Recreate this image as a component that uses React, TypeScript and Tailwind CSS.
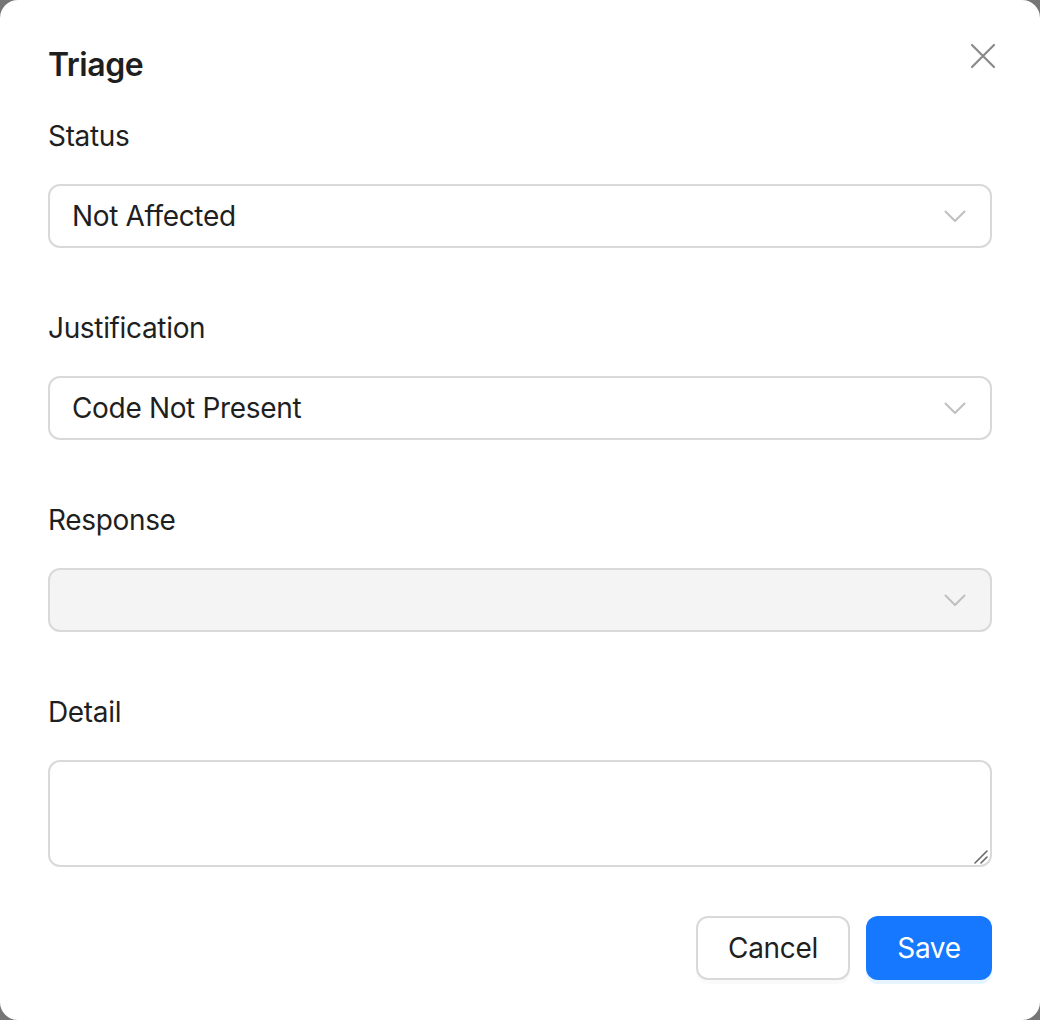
import React from "react";

const Chevron = () => (
  <svg width="22" height="13" viewBox="0 0 22 13" fill="none" className="shrink-0">
    <path d="M1.5 1.5 L11 11 L20.5 1.5" stroke="#bfbfbf" strokeWidth="2" strokeLinecap="round" strokeLinejoin="round" />
  </svg>
);

const Label = ({ children }: { children: React.ReactNode }) => (
  <div className="h-[64px] leading-[64px] text-[28px] tracking-[-0.012em] text-[#1f1f1f] mb-[16px]">{children}</div>
);

const Select = ({ value, disabled }: { value?: string; disabled?: boolean }) => (
  <div
    className={`h-[64px] rounded-[12px] border-2 border-[#d9d9d9] flex items-center justify-between pl-[22px] pr-[24px] mb-[48px] ${
      disabled ? "bg-[#f4f4f4]" : "bg-white"
    }`}
  >
    <span className="text-[28px] tracking-[-0.012em] text-[#1f1f1f]">{value}</span>
    <Chevron />
  </div>
);

export default function App() {
  return (
    <div className="w-[1040px] h-[1020px] bg-[#767676]" style={{ fontFamily: "Inter, 'Noto Sans', sans-serif" }}>
      <div className="w-full h-full bg-white rounded-[18px] px-[48px] pt-[40px] flex flex-col relative">
        <div className="h-[49px] leading-[49px] text-[32px] font-semibold tracking-[-0.015em] text-[#1f1f1f] mb-[15px]">Triage</div>
        <button className="absolute right-[44px] top-[43px] w-[26px] h-[26px]">
          <svg width="26" height="26" viewBox="0 0 26 26" fill="none">
            <path d="M2 2 L24 24 M24 2 L2 24" stroke="#8a8a8a" strokeWidth="2.2" strokeLinecap="round" />
          </svg>
        </button>
        <Label>Status</Label>
        <Select value="Not Affected" />
        <Label>Justification</Label>
        <Select value="Code Not Present" />
        <Label>Response</Label>
        <Select disabled />
        <Label>Detail</Label>
        <div className="relative h-[107px]">
          <textarea className="w-full h-full rounded-[12px] border-2 border-[#d9d9d9] resize-none outline-none px-[24px] py-[10px] text-[28px] block" />
          <svg className="absolute right-[4px] bottom-[3px]" width="14" height="14" viewBox="0 0 14 14" fill="none">
            <path d="M1 13 L13 1 M7 13 L13 7" stroke="#6a6a6a" strokeWidth="1.6" strokeLinecap="round" />
          </svg>
        </div>
        <div className="flex justify-end gap-[16px] mt-[49px]">
          <button className="h-[64px] w-[154px] rounded-[12px] border-2 border-[#d9d9d9] bg-white text-[28px] tracking-[-0.012em] text-[#1f1f1f] shadow-[0_4px_0_rgba(0,0,0,0.02)]">
            Cancel
          </button>
          <button className="h-[64px] w-[126px] rounded-[12px] bg-[#1677ff] text-[28px] tracking-[-0.012em] text-white shadow-[0_4px_0_rgba(5,145,255,0.1)]">
            Save
          </button>
        </div>
      </div>
    </div>
  );
}
